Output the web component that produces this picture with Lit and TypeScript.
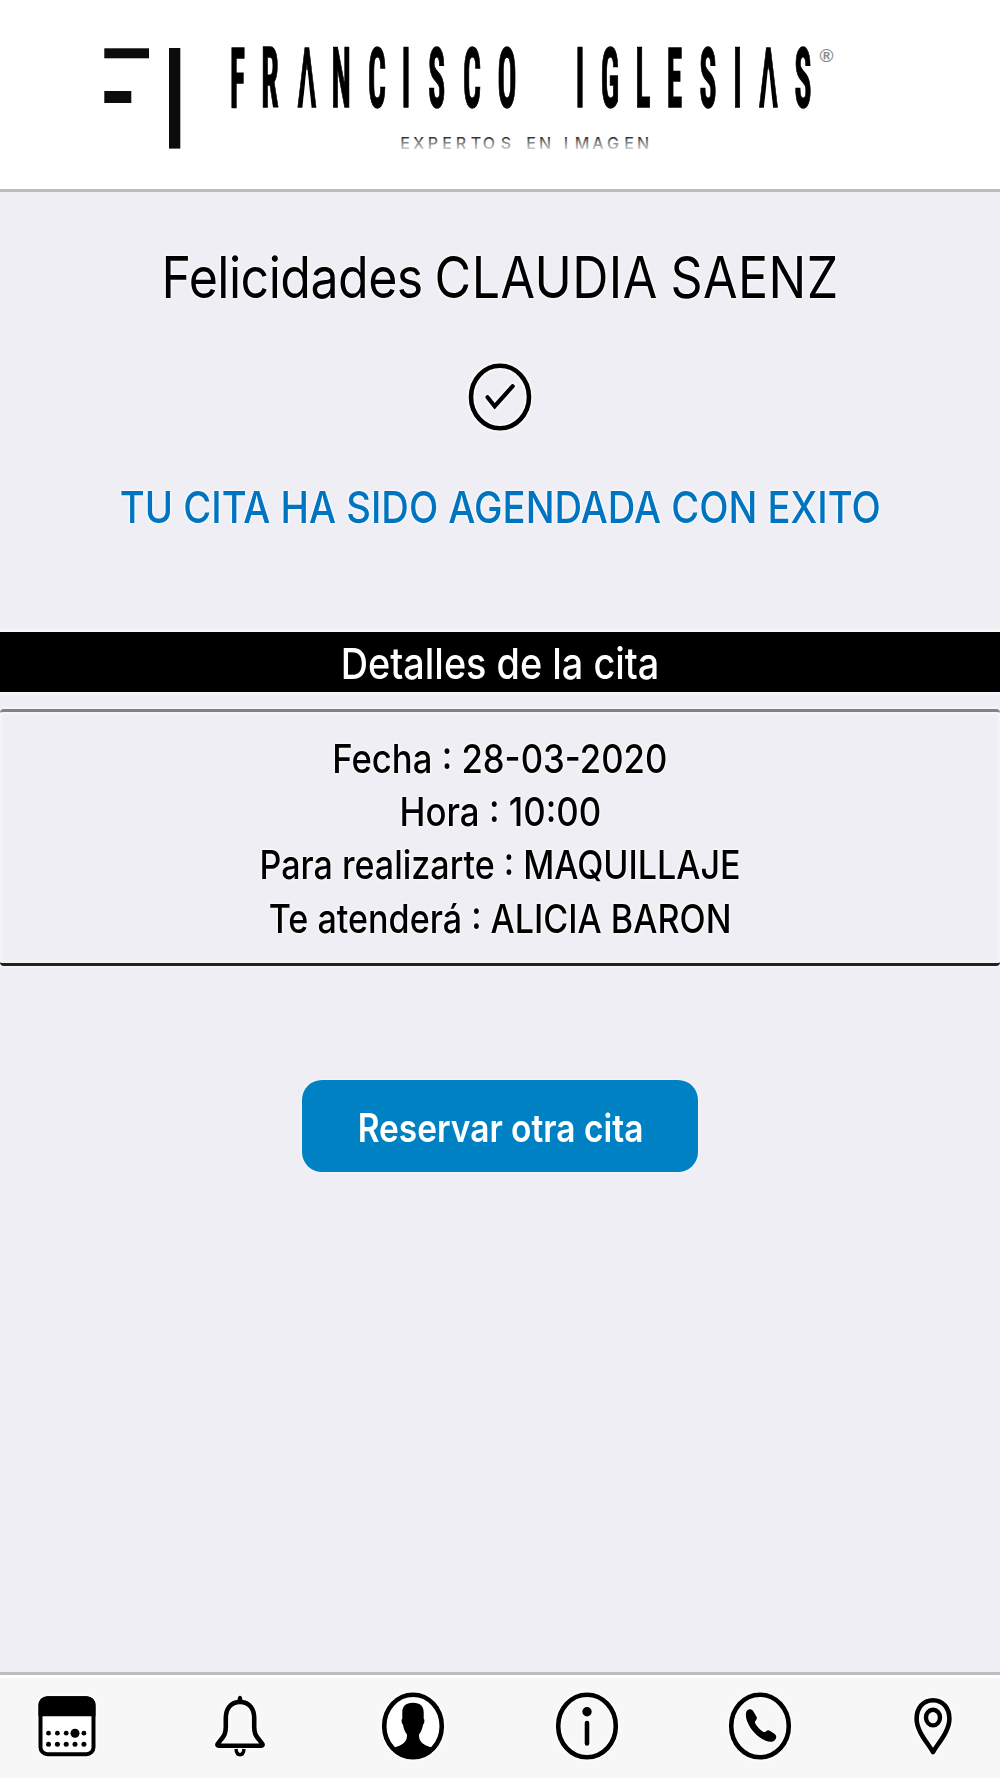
import { LitElement, html, css, svg } from "lit";
import { customElement, property } from "lit/decorators.js";

const GLYPH_SQUEEZE = 0.38;
const WORDMARK = "FRANCISCO IGLESIAS";
const WORDMARK_X = [237.5, 270, 307, 341.2, 377, 406, 436.7, 472, 507, 543, 580, 610, 643, 674.5, 708, 737.5, 768.5, 803];
const TAGLINE = "EXPERTOS EN IMAGEN";
const TAGLINE_X = [405, 418.5, 433, 447, 461, 476, 489, 506, 518, 531, 545, 556, 566, 582, 598, 613, 629, 643];

@customElement("brand-logo")
export class BrandLogo extends LitElement {
  static styles = css`
    :host { display: block; height: 189px; }
    svg { display: block; }
    .wordmark { font: 700 83px "Roboto Condensed", Roboto, sans-serif; text-anchor: middle; fill: #000; stroke: #000; stroke-width: 1.4px; }
    .tagline { font: 500 16px Inter, "Liberation Sans", sans-serif; text-anchor: middle; }
    .reg { font: 700 19px "Liberation Sans", sans-serif; fill: #8a8a8a; text-anchor: middle; }
  `;
  render() {
    return html`
      <svg width="1000" height="189" viewBox="0 0 1000 189" role="img" aria-label="Francisco Iglesias">
        <defs>
          <linearGradient id="fade" gradientUnits="userSpaceOnUse" x1="0" y1="136" x2="0" y2="149">
            <stop offset="0" stop-color="#111" />
            <stop offset="0.3" stop-color="#666" />
            <stop offset="1" stop-color="#ccc" />
          </linearGradient>
        </defs>
        <g fill="#0c0c0b">
          <rect x="104.3" y="48.3" width="44.7" height="10" />
          <rect x="104.3" y="91" width="27" height="12" />
          <rect x="169" y="48" width="11.3" height="100.6" />
        </g>
        <text class="wordmark" transform="scale(${GLYPH_SQUEEZE} 1)" y="107.5"
          x=${WORDMARK_X.map((x) => (x / GLYPH_SQUEEZE).toFixed(1)).join(" ")}>${WORDMARK}</text>
        <g fill="#fff">
          <path d="M306.4 70h1.200l4.200 39.500h-9.600z" />
          <path d="M767.9 70h1.200l4.200 39.500h-9.600z" />
        </g>
        <text class="tagline" fill="url(#fade)" y="148.5" x=${TAGLINE_X.join(" ")}>${TAGLINE}</text>
        <text class="reg" x="826.5" y="62">®</text>
      </svg>
    `;
  }
}

const ICONS = {
  calendar: svg`
    <g transform="translate(-1.300 0)">
      <rect x="6.800" y="6.200" width="53" height="56" rx="7" fill="#fff" stroke="#000" stroke-width="4" />
      <path d="M4.800 24.300V13a8.800 8.800 0 0 1 8.800-8.800H53A8.800 8.800 0 0 1 61.800 13v11.300z" />
      ${[14.8, 23.7, 32.5, 41.3, 50.2].map((x) => svg`<circle cx=${x} cy="52.300" r="2.500" />`)}
      ${[14.8, 23.7, 32.5, 50.2].map((x) => svg`<circle cx=${x} cy="41.200" r="2.400" />`)}
      <circle cx="41.300" cy="41.200" r="4.500" />
    </g>`,
  bell: svg`
    <path d="M32 3.800c1.500 0 2.400 1.700 2.600 5.200h-5.200c.2-3.500 1.100-5.200 2.600-5.200z" />
    <path d="M32 10c-9.500 0-14.200 7-14.200 16v8.500c0 7-1.500 9.200-4.500 12.700L9.900 51.600c-1 1.500-.4 2.200 1 2.200h42.200c1.400 0 2-.7 1-2.200L50.700 47.200c-3-3.500-4.500-5.700-4.500-12.700V26c0-9-4.700-16-14.200-16z" fill="none" stroke="#000" stroke-width="4.600" stroke-linejoin="round" />
    <path d="M28 57c.3 4 1.700 5.700 4 5.700s3.700-1.700 4-5.700" fill="none" stroke="#000" stroke-width="3.400" />`,
  user: svg`
    <defs><clipPath id="disc"><ellipse cx="32" cy="34" rx="30" ry="32.500" /></clipPath></defs>
    <ellipse cx="32" cy="34" rx="28.800" ry="31.300" fill="#fff" stroke="#000" stroke-width="4.600" />
    <path clip-path="url(#disc)" d="M32 10.800c-7.500 0-10.700 3.700-10.700 9.700v6.200c-1.200.7-.9 4.800.7 6 .7 4.300 2 7.300 4 9.700.3 6.600-3.300 9.200-8.300 11.700-3 1.300-5 1.600-6.700 2.200V68h42V56.300c-1.700-.6-3.700-.9-6.700-2.200-5-2.500-8.600-5.100-8.300-11.700 2-2.400 3.300-5.400 4-9.700 1.600-1.200 1.900-5.300.7-6v-6.200c0-6-3.200-9.700-10.700-9.700z" />`,
  info: svg`
    <ellipse cx="32" cy="34" rx="28.800" ry="31.300" fill="none" stroke="#000" stroke-width="4.600" />
    <circle cx="32" cy="19.700" r="4.700" />
    <path d="M32 31v20.500" stroke="#000" stroke-width="4.600" stroke-linecap="round" />`,
  phone: svg`
    <ellipse cx="32" cy="34" rx="28.800" ry="31.300" fill="none" stroke="#000" stroke-width="4.600" />
    <path d="M19.300 18.300c1.700-1.800 4.500-1.400 5.700.5l3.400 5.700c.8 1.400.5 2.800-.6 3.900-.9.900-1 2-.5 3.100 2 3.700 4.700 6.500 8.200 8.400 1 .4 1.700.1 2.600-.7 1.200-1 2.700-1.100 4-.3l4.300 2.800c2.400 1.700 2.400 4.300.6 6.200-2.200 2.400-5.600 2.300-9.300.8-8.800-3.700-15-10.600-18.700-19.700-1.500-3.900-1.700-8.500.3-10.700z" />`,
  pin: svg`
    <path d="M32 8.200c-10 0-16.400 8-16.400 18.500 0 4.700 1.500 9 3.700 13.500C22.700 47.200 28 53.200 32 60c4-6.800 9.300-12.800 12.700-19.800 2.200-4.500 3.700-8.800 3.700-13.500C48.400 16.200 42 8.200 32 8.200z" fill="none" stroke="#000" stroke-width="4.600" stroke-linejoin="round" />
    <ellipse cx="32" cy="25.600" rx="7" ry="7.800" fill="none" stroke="#000" stroke-width="4.400" />`,
};

@customElement("tab-bar")
export class TabBar extends LitElement {
  static styles = css`
    :host { display: block; background: #f7f7f7; border-top: 3px solid #bdbdbd; box-shadow: inset 0 3px 1px #fff; }
    nav { display: flex; justify-content: space-between; padding: 17px 34.700px 0; height: 86px; }
    svg { display: block; width: 64px; height: 68px; overflow: visible; filter: drop-shadow(0 0 1.500px #fff) drop-shadow(0 0 1.500px #fff); }
  `;
  render() {
    return html`<nav>
      ${Object.values(ICONS).map((icon) => html`<svg viewBox="0 0 64 68">${icon}</svg>`)}
    </nav>`;
  }
}

@customElement("appointment-details")
export class AppointmentDetails extends LitElement {
  @property({ attribute: false }) rows: { label: string; value: string; fit: number }[] = [];
  static styles = css`
    :host { display: block; }
    h2 { margin: 0; height: 60px; display: flex; align-items: center; justify-content: center; background: #000; color: #fff;
      font-size: 43px; font-weight: 550; line-height: 56px; padding-top: 3px; box-sizing: border-box; box-shadow: 0 0 4px 1px #fff; }
    h2 span { transform: scaleX(0.88); white-space: nowrap; }
    ul { list-style: none; margin: 17px 0 0; padding: 21px 0 17px; border: solid #828282; border-width: 3px 0 3px;
      border-bottom-color: #222; border-radius: 4px; display: flex; flex-direction: column; align-items: center;
      box-shadow: 0 0 4px #fff, inset 0 0 4px #fff; }
    li { font-size: 39.500px; font-weight: 460; line-height: 53px; white-space: nowrap; text-shadow: 0 0 3px #fff, 0 0 3px #fff; }
    li:last-child { padding-top: 1.500px; }
  `;
  render() {
    return html`
      <h2><span>Detalles de la cita</span></h2>
      <ul>
        ${this.rows.map((r) => html`<li style="transform:scaleX(${r.fit})">${r.label} : ${r.value}</li>`)}
      </ul>
    `;
  }
}

@customElement("app-root")
export class AppRoot extends LitElement {
  static styles = css`
    :host { display: flex; flex-direction: column; height: 1778px; overflow: hidden; background: #efeef4; color: #000;
      font-family: Inter, "Liberation Sans", sans-serif; }
    header { background: #fff; border-bottom: 3px solid #bdbdbd; }
    main { flex: 1; display: flex; flex-direction: column; align-items: center; }
    h1, p { margin: 0; white-space: nowrap; text-shadow: 0 0 3px #fff, 0 0 3px #fff; }
    h1 { margin-top: 55.500px; font-size: 57px; font-weight: 440; line-height: 60px; letter-spacing: -0.600px; word-spacing: -2px; transform: scaleX(0.879); }
    .name { letter-spacing: 0.500px; }
    .check { margin-top: 55.500px; width: 64px; height: 68px; overflow: visible; filter: drop-shadow(0 0 1.500px #fff) drop-shadow(0 0 1.500px #fff); }
    .done { margin-top: 51px; color: #0074c0; font-size: 43.500px; font-weight: 500; line-height: 50px; transform: scaleX(0.878); }
    appointment-details { margin-top: 99.500px; align-self: stretch; }
    button { margin-top: 113.500px; width: 396px; height: 92px; padding: 4px 0 0; border: 0; border-radius: 20px; background: #0081c4;
      color: #fff; font: 600 39px/56px Inter, "Liberation Sans", sans-serif; box-shadow: 0 0 3px #fff; }
    button span { display: inline-block; white-space: nowrap; transform: scaleX(0.858); }
  `;
  render() {
    return html`
      <header><brand-logo></brand-logo></header>
      <main>
        <h1>Felicidades <span class="name">CLAUDIA SAENZ</span></h1>
        <svg class="check" viewBox="0 0 64 68">
          <ellipse cx="32" cy="34" rx="29" ry="31.300" fill="none" stroke="#000" stroke-width="4.600" />
          <path d="M19.500 34.200l7.200 9 18-20" fill="none" stroke="#000" stroke-width="4.200" stroke-linecap="round" />
        </svg>
        <p class="done">TU CITA HA SIDO AGENDADA CON EXITO</p>
        <appointment-details
          .rows=${[
            { label: "Fecha", value: "28-03-2020", fit: 0.878 },
            { label: "Hora", value: "10:00", fit: 0.882 },
            { label: "Para realizarte", value: "MAQUILLAJE", fit: 0.862 },
            { label: "Te atenderá", value: "ALICIA BARON", fit: 0.863 },
          ]}
        ></appointment-details>
        <button><span>Reservar otra cita</span></button>
      </main>
      <tab-bar></tab-bar>
    `;
  }
}
